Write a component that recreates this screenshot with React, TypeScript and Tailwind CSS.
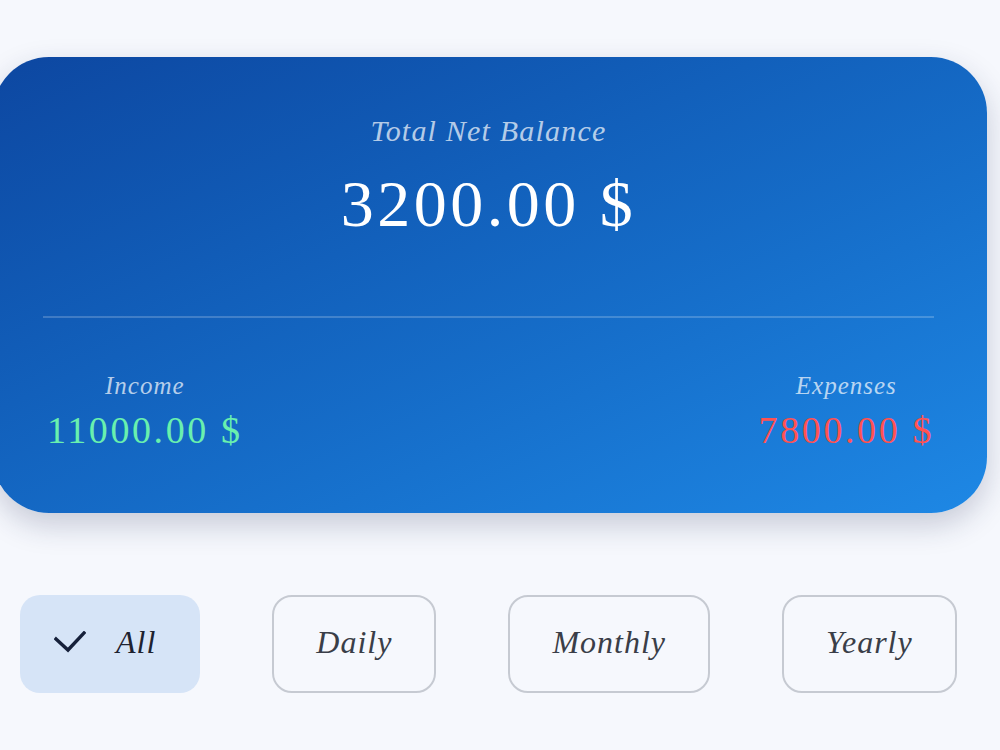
import { useState } from 'react';

const filters = ['All', 'Daily', 'Monthly', 'Yearly'];

const serif = "font-['Liberation_Serif',serif]";

const CheckMark = () => (
  <svg width="32" height="22" viewBox="0 0 32 22" fill="none" className="shrink-0">
    <polyline points="2,8 14,19 30,2" stroke="#16203a" strokeWidth="3.4" strokeLinecap="square" />
  </svg>
);

const BalanceCard = () => (
  <div className="-ml-[7px] w-[994px] rounded-[56px] bg-gradient-to-br from-[#0d47a1] to-[#1e88e5] pl-[50px] pr-[53px] pt-[59px] pb-[64px] shadow-[0_12px_30px_rgba(30,40,80,0.22)]">
    <p className={`${serif} text-center text-[30px] italic leading-none tracking-[1.2px] text-white/70`}>
      Total Net Balance
    </p>
    <p className={`${serif} mt-[25px] text-center text-[66px] leading-none tracking-[3.5px] text-white`}>
      3200.00 $
    </p>
    <div className="mt-[79px] h-[2px] bg-white/20" />
    <div className="mt-[55px] flex justify-between pl-[4px]">
      <div className="flex flex-col items-center">
        <span className={`${serif} text-[25px] italic leading-none tracking-[1px] text-white/70`}>Income</span>
        <span className={`${serif} mt-[13px] text-[38px] leading-none tracking-[2.6px] text-[#69f0ae]`}>
          11000.00 $
        </span>
      </div>
      <div className="flex flex-col items-center">
        <span className={`${serif} text-[25px] italic leading-none tracking-[1px] text-white/70`}>Expenses</span>
        <span className={`${serif} mt-[13px] text-[38px] leading-none tracking-[2.6px] text-[#ff5252]`}>
          7800.00 $
        </span>
      </div>
    </div>
  </div>
);

const App = () => {
  const [active, setActive] = useState('All');

  return (
    <div className="min-h-[750px] w-[1000px] overflow-hidden bg-[#f6f8fd] pt-[57px]">
      <BalanceCard />

      <div className="mt-[82px] flex gap-[72px] px-[20px]">
        {filters.map((f) => {
          const selected = f === active;
          return (
            <button
              key={f}
              onClick={() => setActive(f)}
              className={
                selected
                  ? `${serif} flex h-[98px] items-center gap-[30px] rounded-[20px] bg-[#d6e4f7] pb-[4px] pl-[34px] pr-[44px] text-[32px] italic leading-none tracking-[1px] text-[#1e2230]`
                  : `${serif} flex h-[98px] items-center rounded-[20px] border-2 border-[#c6cad2] px-[42px] pb-[4px] text-[32px] italic leading-none tracking-[1px] text-[#3a3e48]`
              }
            >
              {selected && <CheckMark />}
              {f}
            </button>
          );
        })}
      </div>
    </div>
  );
};

export default App;
